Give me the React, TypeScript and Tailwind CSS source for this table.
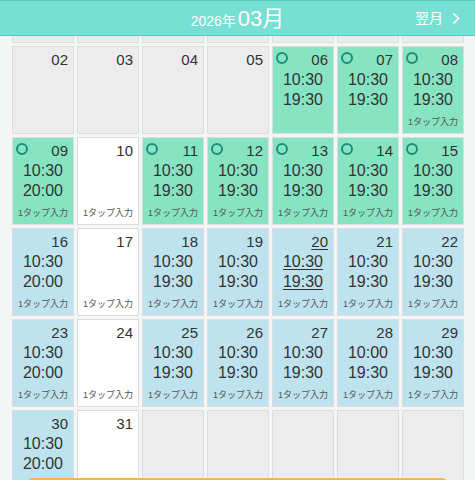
import React from "react";

type Kind = "gray" | "green" | "blue" | "white";

interface Day {
  num?: string;
  kind: Kind;
  circle?: boolean;
  times?: [string, string];
  tap?: boolean;
  today?: boolean;
}

const bg: Record<Kind, string> = {
  gray: "bg-[#ececec]",
  green: "bg-[#87e4c2]",
  blue: "bg-[#bee3ef]",
  white: "bg-white",
};

const g = (num: string, times?: [string, string], tap = true): Day => ({
  num,
  kind: "green",
  circle: true,
  times,
  tap,
});
const b = (num: string, times: [string, string], today = false, tap = true): Day => ({
  num,
  kind: "blue",
  times,
  tap,
  today,
});
const w = (num: string, tap = true): Day => ({ num, kind: "white", tap });

// last row runs past the bottom of the window, so its tap labels are never visible
const weeks: Day[][] = [
  [
    { num: "02", kind: "gray" },
    { num: "03", kind: "gray" },
    { num: "04", kind: "gray" },
    { num: "05", kind: "gray" },
    g("06", ["10:30", "19:30"], false),
    g("07", ["10:30", "19:30"], false),
    g("08", ["10:30", "19:30"]),
  ],
  [
    g("09", ["10:30", "20:00"]),
    w("10"),
    g("11", ["10:30", "19:30"]),
    g("12", ["10:30", "19:30"]),
    g("13", ["10:30", "19:30"]),
    g("14", ["10:30", "19:30"]),
    g("15", ["10:30", "19:30"]),
  ],
  [
    b("16", ["10:30", "20:00"]),
    w("17"),
    b("18", ["10:30", "19:30"]),
    b("19", ["10:30", "19:30"]),
    b("20", ["10:30", "19:30"], true),
    b("21", ["10:30", "19:30"]),
    b("22", ["10:30", "19:30"]),
  ],
  [
    b("23", ["10:30", "20:00"]),
    w("24"),
    b("25", ["10:30", "19:30"]),
    b("26", ["10:30", "19:30"]),
    b("27", ["10:30", "19:30"]),
    b("28", ["10:00", "19:30"]),
    b("29", ["10:30", "19:30"]),
  ],
  [
    b("30", ["10:30", "20:00"], false, false),
    w("31", false),
    { kind: "gray" },
    { kind: "gray" },
    { kind: "gray" },
    { kind: "gray" },
    { kind: "gray" },
  ],
];

const DayCell: React.FC<{ day: Day }> = ({ day }) => {
  const u = day.today ? "underline decoration-1 underline-offset-2" : "";
  return (
    <div
      className={`flex flex-col h-[88px] border border-[#dadee2] px-[4px] pt-[3px] pb-[5px] text-[#333] ${bg[day.kind]}`}
    >
      <div className="relative flex h-[20px] items-center justify-end">
        {day.circle && (
          <span className="absolute left-[-1px] top-[2px] h-[12px] w-[12px] rounded-full border-2 border-[#1b8f76]" />
        )}
        <span className={`text-[15px] leading-[20px] pr-[1px] ${u}`}>
          {day.num}
        </span>
      </div>
      {day.times && (
        <div className="flex flex-col items-center text-[16px] leading-[20px]">
          <span className={u}>{day.times[0]}</span>
          <span className={u}>{day.times[1]}</span>
        </div>
      )}
      {day.tap && (
        <div className="mt-auto text-center text-[9px] leading-[12px] text-[#555]">
          1タップ入力
        </div>
      )}
    </div>
  );
};

export default function App() {
  return (
    <div
      className="relative h-[480px] w-[475px] overflow-hidden bg-[#f4f5f5]"
      style={{ fontFamily: '"Liberation Sans", "Noto Sans CJK JP", sans-serif' }}
    >
      <header className="relative z-10 flex h-[36px] items-center justify-center border-t border-b border-[#5ec8bd] bg-[#77e0d5] text-white">
        <div className="flex items-baseline">
          <span className="text-[14px]">2026年</span>
          <span className="ml-[2px] text-[22px]">03月</span>
        </div>
        <div className="absolute right-[15px] top-0 flex h-full items-center gap-[9px]">
          <span className="text-[14px]">翌月</span>
          <svg width="8" height="13" viewBox="0 0 8 13" fill="none">
            <polyline
              points="1.5,1.5 6.5,6.5 1.5,11.5"
              stroke="white"
              strokeWidth="1.6"
            />
          </svg>
        </div>
      </header>

      <div className="pl-[12px] pr-[11px]">
        <div className="grid grid-cols-7 gap-[3px]">
          {Array.from({ length: 7 }).map((_, i) => (
            <div
              key={i}
              className="h-[7px] border border-t-0 border-[#dadee2] bg-[#ececec]"
            />
          ))}
          {weeks.flat().map((d, i) => (
            <DayCell key={i} day={d} />
          ))}
        </div>
      </div>

      <div className="absolute left-[27px] top-[478px] h-[20px] w-[421px] rounded-t-[6px] bg-[#f6b350]" />
    </div>
  );
}
